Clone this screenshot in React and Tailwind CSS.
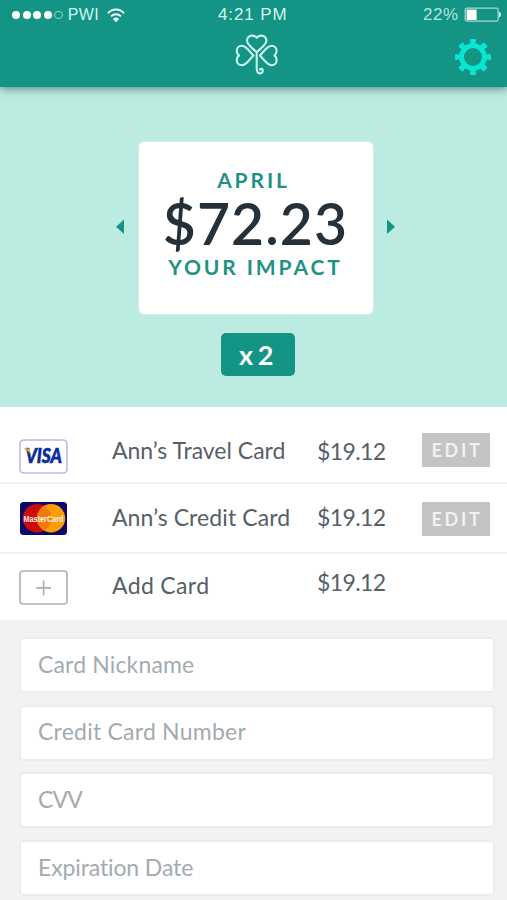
const cards = [
  {
    name: "Ann’s Travel Card",
    amount: "$19.12",
    icon: VisaIcon,
    editable: true,
    rowClass: "h-[77px] border-b-2",
    iconClass: "mt-8",
    nameClass: "mt-[27px]",
    amountClass: "mt-7",
    editClass: "mt-[26px]",
  },
  {
    name: "Ann’s Credit Card",
    amount: "$19.12",
    icon: MasterCardIcon,
    editable: true,
    rowClass: "h-[70px] border-b-2",
    iconClass: "mt-[17px]",
    nameClass: "mt-[17px] tracking-[0.1px]",
    amountClass: "mt-[17px]",
    editClass: "mt-[18px]",
  },
  {
    name: "Add Card",
    amount: "$19.12",
    icon: AddIcon,
    editable: false,
    rowClass: "h-[66px]",
    iconClass: "mt-4",
    nameClass: "mt-[15px] tracking-[0.35px]",
    amountClass: "mt-3",
    editClass: "",
  },
];

const fields = [
  { label: "Card Nickname", spacing: "tracking-[0.15px]" },
  { label: "Credit Card Number", spacing: "tracking-[0.23px]" },
  { label: "CVV", spacing: "tracking-[-0.8px]" },
  { label: "Expiration Date", spacing: "tracking-[-0.12px]" },
];

const gearAngles = [0, 45, 90, 135, 180, 225, 270, 315];

function CloverIcon() {
  const leaf =
    "M21.7 18.3 C17.5 14 12 11 12 6.6 C12 3.6 14.2 1.6 17 1.6 C19 1.6 20.8 2.4 21.7 3.8 C22.6 2.4 24.4 1.6 26.4 1.6 C29.2 1.6 31.4 3.6 31.4 6.6 C31.4 11 25.9 14 21.7 18.3 Z";

  return (
    <svg
      width="44"
      height="42"
      viewBox="0 0 44 42"
      fill="none"
      stroke="#c9f5ee"
      strokeWidth="2.1"
      strokeLinecap="round"
      strokeLinejoin="round"
    >
      <path d={leaf} />
      <path d={leaf} transform="rotate(-90 21.7 21.5)" />
      <path d={leaf} transform="rotate(90 21.7 21.5)" />
      <path d="M21.7 20 V34 C21.7 37.5 22.8 39.4 24.8 39.4 C26.8 39.4 28 37.9 27.8 36.2 C27.6 34.7 25.7 34.3 24.9 35.6" />
    </svg>
  );
}

function GearIcon() {
  return (
    <svg width="38" height="38" viewBox="-19 -19 38 38">
      <circle r="11.4" fill="none" stroke="#06e8d2" strokeWidth="4.8" />
      {gearAngles.map((angle) => (
        <path
          key={angle}
          d="M-4 -12.5 L-2.3 -14.2 L-3.1 -16 Q-3.3 -18 -1.8 -18 H1.8 Q3.3 -18 3.1 -16 L2.3 -14.2 L4 -12.5 Z"
          fill="#06e8d2"
          transform={`rotate(${angle})`}
        />
      ))}
    </svg>
  );
}

function WifiIcon() {
  return (
    <svg width="18" height="15" viewBox="0 0 18 15" fill="none" stroke="#e4faf6" strokeWidth="2">
      <path d="M1 5.2 C5.5 0.4 12.5 0.4 17 5.2" />
      <path d="M4 8.4 C6.9 5.5 11.1 5.5 14 8.4" />
      <path d="M9 14.2 L5.9 10.9 C7.7 9.1 10.3 9.1 12.1 10.9 Z" fill="#ffffff" stroke="none" />
    </svg>
  );
}

function BatteryIcon() {
  return (
    <svg width="38" height="16" viewBox="0 0 38 16">
      <rect x="1.2" y="1.2" width="33" height="13" rx="1.8" fill="none" stroke="#a5dcd3" strokeWidth="1.2" />
      <rect x="2.6" y="2.6" width="10" height="10.4" fill="#ffffff" />
      <path d="M35 5 C37.6 5.4 37.6 9.8 35 10.3 Z" fill="#e4faf6" />
    </svg>
  );
}

function VisaIcon() {
  return (
    <svg width="49" height="35" viewBox="0 0 49 35">
      <rect x="1" y="1" width="47" height="33" rx="4" fill="#ffffff" stroke="#bdb9e6" strokeWidth="1.6" />
      <text
        x="6.5"
        y="24"
        textLength="36.5"
        lengthAdjust="spacingAndGlyphs"
        fill="#0b2a9c"
        stroke="#0b2a9c"
        strokeWidth="0.6"
        className="font-[Lato,sans-serif] text-[20px] font-black italic"
      >
        VISA
      </text>
      <path d="M4.5 9.4 H9.2 C10.4 9.4 10.8 10 10.9 11 L11.2 14.6 C9.8 12.4 7.6 10.8 4.5 9.9 Z" fill="#f0a52c" />
    </svg>
  );
}

function MasterCardIcon() {
  return (
    <svg width="49" height="35" viewBox="0 0 49 35" className="overflow-visible">
      <rect x="1" y="1" width="47" height="33" rx="3.5" fill="#0c0868" />
      <circle cx="18" cy="17.3" r="14.2" fill="#cf0a0c" />
      <circle cx="32" cy="17.3" r="14.2" fill="#fc9d06" />
      <path d="M25 4.9 A14.2 14.2 0 0 1 25 29.7 A14.2 14.2 0 0 1 25 4.9 Z" fill="#e8640a" opacity="0.6" />
      <text
        x="4.5"
        y="21"
        textLength="40"
        lengthAdjust="spacingAndGlyphs"
        fill="#fff3ea"
        className="font-['Liberation_Sans',sans-serif] text-[9.5px] leading-none font-bold"
      >
        MasterCard
      </text>
    </svg>
  );
}

function AddIcon() {
  return (
    <svg width="49" height="35" viewBox="0 0 49 35" fill="none" stroke="#adafb1" strokeWidth="1.6">
      <rect x="1" y="1" width="47" height="33" rx="3" />
      <path d="M24.6 10.5 V25.3 M17.2 17.9 H32" />
    </svg>
  );
}

function StatusBar() {
  return (
    <div className="flex h-[30px] items-center font-['Liberation_Sans',Arial,sans-serif] text-[17px] text-[#d5f5f0]">
      <div className="flex w-[218px] items-center pl-3">
        <div className="flex gap-[2.3px]">
          {[0, 1, 2, 3].map((dot) => (
            <span key={dot} className="size-[8.3px] rounded-full bg-white" />
          ))}
          <span className="size-[8.3px] rounded-full border border-[#8fd3c9]" />
        </div>
        <span className="ml-[5px] w-[39px] text-[16px] tracking-[0.4px] whitespace-nowrap">PWI</span>
        <WifiIcon />
      </div>
      <span className="w-[205px] tracking-[0.9px]">4:21 PM</span>
      <span className="w-[41px] tracking-[0.6px] text-[#b5e5dd]">22%</span>
      <BatteryIcon />
    </div>
  );
}

function Header() {
  return (
    <header className="relative z-10 h-[87px] bg-[#139484] shadow-[0_2px_8px_rgba(0,50,45,0.5)]">
      <StatusBar />
      <div className="grid grid-cols-[1fr_44px_1fr] pt-1">
        <span />
        <div className="ml-[3px]">
          <CloverIcon />
        </div>
        <button className="mt-1 mr-[15px] justify-self-end" aria-label="Settings">
          <GearIcon />
        </button>
      </div>
    </header>
  );
}

function Impact() {
  return (
    <section className="flex h-80 flex-col items-center bg-[#bcebe2] pt-[54px] pl-[3px]">
      <div className="flex items-center">
        <button className="-mt-[3px]" aria-label="Previous month">
          <svg width="8" height="16" viewBox="0 0 8 16">
            <path d="M8 0.5 V15 L0 7.8 Z" fill="#139484" />
          </svg>
        </button>
        <div className="mr-[13px] ml-[14px] flex h-[174px] w-[236px] flex-col items-center rounded-md border border-[#dce8e6] bg-white pt-[25px] text-[#1f9383]">
          <span className="mr-[4px] text-[21px] leading-[25px] font-bold tracking-[2.9px]">APRIL</span>
          <span className="-mt-[3px] text-[57px] leading-[68px] font-semibold tracking-[1.1px] text-[#24303a]">
            $72.23
          </span>
          <span className="-mt-[3px] text-[21px] leading-[25px] font-bold tracking-[2.9px] whitespace-nowrap">
            YOUR IMPACT
          </span>
        </div>
        <button className="-mt-[3px]" aria-label="Next month">
          <svg width="8" height="16" viewBox="0 0 8 16">
            <path d="M0 0.5 V15 L8 7.8 Z" fill="#139484" />
          </svg>
        </button>
      </div>
      <button className="mt-[18px] ml-[5px] h-[43px] w-[74px] rounded-[5px] bg-[#139484] pr-[2px] text-[27px] leading-[42px] font-bold tracking-[0.5px] text-white [word-spacing:-3px]">
        x 2
      </button>
    </section>
  );
}

function CardRow({ card }) {
  const Icon = card.icon;

  return (
    <li className={`flex items-start border-[#f0f0f0] pl-[19px] text-[23px] leading-8 text-[#566068] ${card.rowClass}`}>
      <span className={`w-[93px] ${card.iconClass}`}>
        <Icon />
      </span>
      <span className={`w-[205px] whitespace-nowrap ${card.nameClass}`}>{card.name}</span>
      <span className={`w-[104.5px] tracking-[-0.6px] ${card.amountClass}`}>{card.amount}</span>
      {card.editable && (
        <button
          className={`h-[34px] w-[68px] bg-[#c4c4c4] pl-[3px] text-[18px] leading-[34px] font-bold tracking-[2.7px] text-[#f1f1f1] ${card.editClass}`}
        >
          EDIT
        </button>
      )}
    </li>
  );
}

export default function App() {
  return (
    <main className="h-[900px] w-[507px] overflow-hidden bg-white font-[Lato,sans-serif]">
      <Header />
      <Impact />
      <ul>
        {cards.map((card) => (
          <CardRow key={card.name} card={card} />
        ))}
      </ul>
      <form className="flex h-[280px] flex-col gap-[11.7px] bg-[#f2f2f2] pt-[17px] pr-3 pl-[19px]">
        {fields.map((field) => (
          <input
            key={field.label}
            aria-label={field.label}
            placeholder={field.label}
            className={`h-14 w-full shrink-0 rounded-[5px] border-2 border-[#ececec] bg-white pb-[3px] pl-[17px] text-[23px] text-[#566068] placeholder:text-[#a2abb1] ${field.spacing}`}
          />
        ))}
      </form>
    </main>
  );
}
